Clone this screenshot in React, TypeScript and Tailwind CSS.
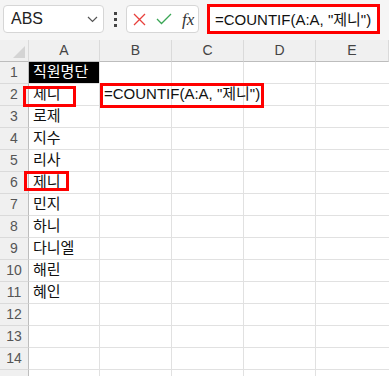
import React from "react";

const names = ["직원명단", "제니", "로제", "지수", "리사", "제니", "민지", "하니", "다니엘", "해린", "혜인", "", "", "", ""];
const cols = ["A", "B", "C", "D", "E"];
const font = { fontFamily: '"Liberation Sans", "Noto Sans CJK KR", sans-serif' };

export default function App() {
  return (
    <div className="relative w-[389px] h-[376px] overflow-hidden bg-white" style={font}>
      {/* toolbar */}
      <div className="h-[40px] bg-[#f5f5f5] flex items-start pt-[5px] pl-[3px]">
        <div className="w-[101px] h-[28px] bg-white border border-[#d6d6d6] rounded-[4px] flex items-center pl-[7px] pr-[5px]">
          <span className="text-[16px] text-[#222] flex-1 leading-none">ABS</span>
          <svg width="11" height="7" viewBox="0 0 11 7" className="mt-[1px]">
            <path d="M1 1 L5.5 5.5 L10 1" stroke="#555" strokeWidth="1.2" fill="none" />
          </svg>
        </div>
        <div className="w-[22px] h-[28px] flex flex-col items-center justify-center gap-[3px]">
          <div className="w-[3px] h-[3px] bg-[#444]" />
          <div className="w-[3px] h-[3px] bg-[#444]" />
          <div className="w-[3px] h-[3px] bg-[#444]" />
        </div>
        <div className="w-[73px] h-[28px] bg-white border border-[#d6d6d6] rounded-[4px] flex items-center pl-[6px] gap-[10px]">
          <svg width="13" height="13" viewBox="0 0 13 13">
            <path d="M1 1 L12 12 M12 1 L1 12" stroke="#e8413c" strokeWidth="1.3" />
          </svg>
          <svg width="16" height="12" viewBox="0 0 16 12">
            <path d="M1 6 L5.5 10.5 L15 1" stroke="#3aa655" strokeWidth="1.3" fill="none" />
          </svg>
          <span className="text-[17px] italic text-[#333] leading-none" style={{ fontFamily: '"Liberation Serif", serif' }}>fx</span>
        </div>
        <div className="ml-[8px] w-[173px] h-[30px] mt-[-1px] bg-white border-[3px] border-[#ff0000] flex items-center pl-[5px]">
          <span className="text-[15px] text-[#111] whitespace-nowrap leading-none">=COUNTIF(A:A, "제니")</span>
        </div>
      </div>

      {/* grid */}
      <div className="grid grid-cols-[29px_71px_72px_72px_72px_73px] auto-rows-[22px]">
        <div className="bg-[#f0f0f0] border-b border-b-[#bdbdbd] border-r border-r-[#dadada] relative">
          <svg width="12" height="12" viewBox="0 0 12 12" className="absolute right-[3px] bottom-[3px]">
            <path d="M12 0 L12 12 L0 12 Z" fill="#d4d4d4" />
          </svg>
        </div>
        {cols.map((c) => (
          <div key={c} className="bg-[#f0f0f0] border-b border-b-[#bdbdbd] border-r border-r-[#dadada] flex items-center justify-center text-[14px] text-[#444]">
            {c}
          </div>
        ))}
        {names.map((n, i) => (
          <React.Fragment key={i}>
            <div className="bg-[#f0f0f0] border-r border-r-[#bdbdbd] border-b border-b-[#dadada] flex items-center justify-center text-[14px] text-[#555]">
              {i < 14 ? i + 1 : ""}
            </div>
            <div className={`border-r border-b border-[#e1e1e1] flex items-center pl-[4px] text-[15px] whitespace-nowrap ${i === 0 ? "bg-black text-white" : "text-[#111]"}`}>
              {n}
            </div>
            <div className="border-r border-b border-[#e1e1e1] flex items-center text-[15px] text-[#111] whitespace-nowrap overflow-visible relative z-10">
              {i === 1 ? <span className="pl-[4px]">=COUNTIF(A:A, "제니")</span> : null}
            </div>
            <div className="border-r border-b border-[#e1e1e1]" />
            <div className="border-r border-b border-[#e1e1e1]" />
            <div className="border-b border-[#e1e1e1]" />
          </React.Fragment>
        ))}
      </div>

      {/* highlight boxes */}
      <div className="absolute left-[23px] top-[86px] w-[53px] h-[21px] border-[3px] border-[#ff0000] z-20" />
      <div className="absolute left-[24px] top-[171px] w-[45px] h-[20px] border-[3px] border-[#ff0000] z-20" />
      <div className="absolute left-[100px] top-[83px] w-[164px] h-[25px] border-[3px] border-[#ff0000] z-20" />
    </div>
  );
}
